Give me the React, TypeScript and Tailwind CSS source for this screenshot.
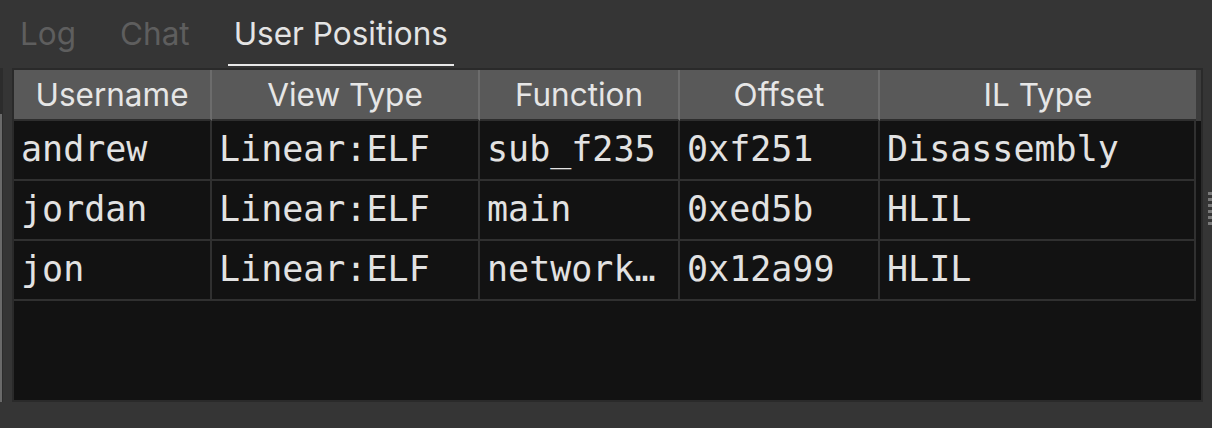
const columns = [
    { title: "Username", width: "w-[198px]" },
    { title: "View Type", width: "w-[268px]" },
    { title: "Function", width: "w-[200px]" },
    { title: "Offset", width: "w-[200px]" },
    { title: "IL Type", width: "w-[316px]" },
];

const rows = [
    ["andrew", "Linear:ELF", "sub_f235", "0xf251", "Disassembly"],
    ["jordan", "Linear:ELF", "main", "0xed5b", "HLIL"],
    ["jon", "Linear:ELF", "network…", "0x12a99", "HLIL"],
];

const uiFont = { fontFamily: "Inter, 'Open Sans', sans-serif" };
const monoFont = { fontFamily: "'DejaVu Sans Mono', monospace" };

function Tabs() {
    const tabs = ["Log", "Chat", "User Positions"];
    return (
        <div className="h-[68px] flex items-start pl-[14px] gap-[32px]" style={uiFont}>
            {tabs.map((t, i) => {
                const active = i === 2;
                return (
                    <div
                        key={t}
                        className={
                            "px-[6px] h-[66px] pt-[15px] text-[31.5px] leading-[38px] " +
                            (active ? "text-[#e4e4e4] border-b-2 border-[#e8e8e8]" : "text-[#5e5e5e]")
                        }
                    >
                        {t}
                    </div>
                );
            })}
        </div>
    );
}

function Grid() {
    return (
        <div className="ml-[9px] w-[1191px] h-[334px] border-2 border-[#2a2a2a] bg-[#121212] flex flex-col">
            <div className="flex h-[51px] bg-[#3c3c3c]">
                {columns.map((c, i) => (
                    <div
                        key={c.title}
                        className={
                            c.width +
                            " h-full bg-[#595959] border-b-2 border-b-[#2e2e2e] flex items-center justify-center text-[31.5px] text-[#e6e6e6] " +
                            (i < columns.length - 1 ? "border-r-2 border-r-[#6c6c6c]" : "")
                        }
                        style={uiFont}
                    >
                        {c.title}
                    </div>
                ))}
            </div>
            {rows.map((r) => (
                <div key={r[0]} className="flex h-[60px]">
                    {r.map((v, i) => (
                        <div
                            key={i}
                            className={
                                columns[i].width +
                                " h-full border-b-2 border-r-2 border-[#303030] flex items-center pl-[7px] pr-[4px] pb-[3px] text-[35px] leading-[50px] text-[#e2e2e2] whitespace-nowrap"
                            }
                            style={monoFont}
                        >
                            {v}
                        </div>
                    ))}
                </div>
            ))}
        </div>
    );
}

function App() {
    return (
        <div className="w-[1212px] h-[428px] bg-[#353535] overflow-hidden">
            <Tabs />
            <div className="flex">
                <div className="w-[3px] h-[334px] bg-[#2c2c2c] flex flex-col justify-end">
                    <div className="h-[288px] w-[2px] bg-[#6a6a6a]" />
                </div>
                <Grid />
                <div className="flex flex-col gap-[3px] pt-[124px] pl-[5px]">
                    {[0, 1, 2, 3, 4, 5].map((d) => (
                        <div key={d} className="w-[4px] h-[3px] bg-[#7a7a7a]" />
                    ))}
                </div>
            </div>
        </div>
    );
}

export default App;
